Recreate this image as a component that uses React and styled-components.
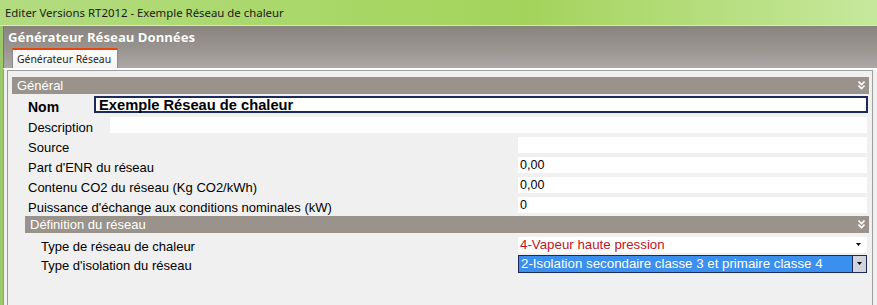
import styled, { createGlobalStyle } from "styled-components";

const GlobalStyle = createGlobalStyle`
  html, body { margin: 0; padding: 0; background: #f0f0f0; }
  body { font-family: "Liberation Sans", Arial, sans-serif; font-size: 13px; color: #000; }
`;

const Window = styled.div`
  width: 877px;
  height: 305px;
  display: flex;
  flex-direction: column;
  overflow: hidden;
  background: #f0f0f0;
`;

const TitleBar = styled.div`
  height: 26px;
  flex: none;
  display: flex;
  align-items: center;
  padding-left: 5px;
  font-family: "Noto Sans", sans-serif;
  font-size: 11.4px;
  color: #1a1a1a;
  background: linear-gradient(to right, #b3dc80 0%, #a7d663 45%, #a4d35c 60%, #c6e89c 100%);
  border-bottom: 1px solid #d6ecb8;
  box-sizing: border-box;
`;

const Frame = styled.div`
  flex: 1;
  display: flex;
  flex-direction: column;
  border-left: 3px solid #9cc86c;
  box-sizing: border-box;
`;

const HeaderArea = styled.div`
  height: 42px;
  flex: none;
  display: flex;
  flex-direction: column;
  background: linear-gradient(to bottom, #8a847f 0%, #98938f 50%, #aca8a5 100%);
  border-left: 1px solid #777;
`;

const Heading = styled.div`
  height: 21px;
  display: flex;
  align-items: center;
  padding-left: 4px;
  font-family: "Noto Sans", sans-serif;
  font-weight: bold;
  font-size: 13.2px;
  color: #fff;
  text-shadow: 0 0 1px rgba(0, 0, 0, 0.2);
`;

const TabStrip = styled.div`
  flex: 1;
  display: flex;
  align-items: flex-end;
  padding-left: 8px;
`;

const Tab = styled.div`
  height: 18px;
  padding: 0 6px 0 4px;
  display: flex;
  align-items: center;
  font-family: "Noto Sans", sans-serif;
  font-size: 10.4px;
  color: #222;
  background: linear-gradient(to bottom, #fdfdfd, #f4f4f4);
  border-top: 2px solid #e3470f;
  border-left: 1px solid #8c8c8c;
  border-right: 1px solid #8c8c8c;
`;

const Body = styled.div`
  flex: 1;
  display: flex;
  padding: 0 4px 0 3px;
  background: #f0f0f0;
  border-left: 1px solid #9a9a9a;
  border-top: 2px solid #fff;
`;

const Panel = styled.div`
  flex: 1;
  border: 1px solid #9c9c9c;
  border-bottom: none;
  padding: 6px 3px 0 4px;
  display: flex;
  flex-direction: column;
`;

const Section = styled.div`
  display: flex;
  flex-direction: column;
  margin-left: ${(p) => p.$indent || 0}px;
  margin-top: ${(p) => p.$top || 0}px;
`;

const Bar = styled.div`
  height: 17px;
  display: flex;
  align-items: center;
  justify-content: space-between;
  padding: 0 4px 0 5px;
  margin-bottom: ${(p) => p.$gap || 0}px;
  background: #99938c;
  color: #fff;
  font-size: 13px;
`;

const Row = styled.div`
  display: flex;
  align-items: center;
  height: ${(p) => p.$h || 20}px;
  padding-left: 16px;
`;

const Label = styled.div`
  width: ${(p) => p.$w}px;
  flex: none;
  padding-top: 4px;
  font-size: ${(p) => (p.$bold ? 14 : 13)}px;
  font-weight: ${(p) => (p.$bold ? "bold" : "normal")};
  white-space: nowrap;
`;

const Field = styled.div`
  flex: 1;
  height: 16px;
  margin-right: 2px;
  display: flex;
  align-items: center;
  padding-left: 2px;
  background: #fff;
  font-size: 12.5px;
  white-space: nowrap;
`;

const NameField = styled.div`
  flex: 1;
  height: 13px;
  margin-right: 1px;
  display: flex;
  align-items: center;
  padding-left: 3px;
  background: #fff;
  border: 2px solid #1b2a58;
  font-weight: bold;
  font-size: 14.7px;
  white-space: nowrap;
`;

const Combo = styled.div`
  flex: 1;
  height: 16px;
  margin-right: 2px;
  display: flex;
  align-items: center;
  background: #fff;
  border: ${(p) => (p.$selected ? "1px solid #1b2a58" : "none")};
  font-size: 13.3px;
`;

const ComboText = styled.div`
  flex: 1;
  height: 100%;
  display: flex;
  align-items: center;
  padding-left: 2px;
  color: ${(p) => (p.$selected ? "#fff" : "#c3151d")};
  background: ${(p) => (p.$selected ? "#3b8fee" : "#fff")};
  white-space: nowrap;
`;

const ComboButton = styled.div`
  width: 13px;
  height: 100%;
  display: flex;
  align-items: center;
  justify-content: center;
  background: ${(p) => (p.$selected ? "#d2d3dc" : "#fff")};
  border-left: ${(p) => (p.$selected ? "1px solid #1b2a58" : "none")};
  margin-right: ${(p) => (p.$selected ? 0 : 2)}px;
`;

const Arrow = () => (
  <svg width="5" height="3" viewBox="0 0 5 3">
    <path d="M0 0H5L2.5 3Z" fill="#000" />
  </svg>
);

const Chevrons = () => (
  <svg width="7" height="9" viewBox="0 0 7 9">
    <path d="M0.5 0.5L3.5 3.5L6.5 0.5M0.5 4.5L3.5 7.5L6.5 4.5" stroke="#fff" strokeWidth="1.6" fill="none" />
  </svg>
);

const general = [
  { label: "Description", w: 82, value: "" },
  { label: "Source", w: 490, value: "" },
  { label: "Part d'ENR du réseau", w: 490, value: "0,00" },
  { label: "Contenu CO2 du réseau (Kg CO2/kWh)", w: 490, value: "0,00" },
  { label: "Puissance d'échange aux conditions nominales (kW)", w: 490, value: "0" },
];

export default function App() {
  return (
    <>
      <GlobalStyle />
      <Window>
        <TitleBar>Editer Versions RT2012 - Exemple Réseau de chaleur</TitleBar>
        <Frame>
          <HeaderArea>
            <Heading>Générateur Réseau Données</Heading>
            <TabStrip>
              <Tab>Générateur Réseau</Tab>
            </TabStrip>
          </HeaderArea>
          <Body>
            <Panel>
              <Section>
                <Bar>
                  Général
                  <Chevrons />
                </Bar>
                <Row $h={21}>
                  <Label $w={66} $bold>Nom</Label>
                  <NameField>Exemple Réseau de chaleur</NameField>
                </Row>
                {general.map((r) => (
                  <Row key={r.label}>
                    <Label $w={r.w}>{r.label}</Label>
                    <Field>{r.value}</Field>
                  </Row>
                ))}
              </Section>
              <Section $indent={13} $top={1}>
                <Bar $gap={2}>
                  Définition du réseau
                  <Chevrons />
                </Bar>
                <Row $h={19}>
                  <Label $w={477}>Type de réseau de chaleur</Label>
                  <Combo>
                    <ComboText>4-Vapeur haute pression</ComboText>
                    <ComboButton><Arrow /></ComboButton>
                  </Combo>
                </Row>
                <Row $h={19}>
                  <Label $w={477}>Type d'isolation du réseau</Label>
                  <Combo $selected>
                    <ComboText $selected>2-Isolation secondaire classe 3 et primaire classe 4</ComboText>
                    <ComboButton $selected><Arrow /></ComboButton>
                  </Combo>
                </Row>
              </Section>
            </Panel>
          </Body>
        </Frame>
      </Window>
    </>
  );
}
